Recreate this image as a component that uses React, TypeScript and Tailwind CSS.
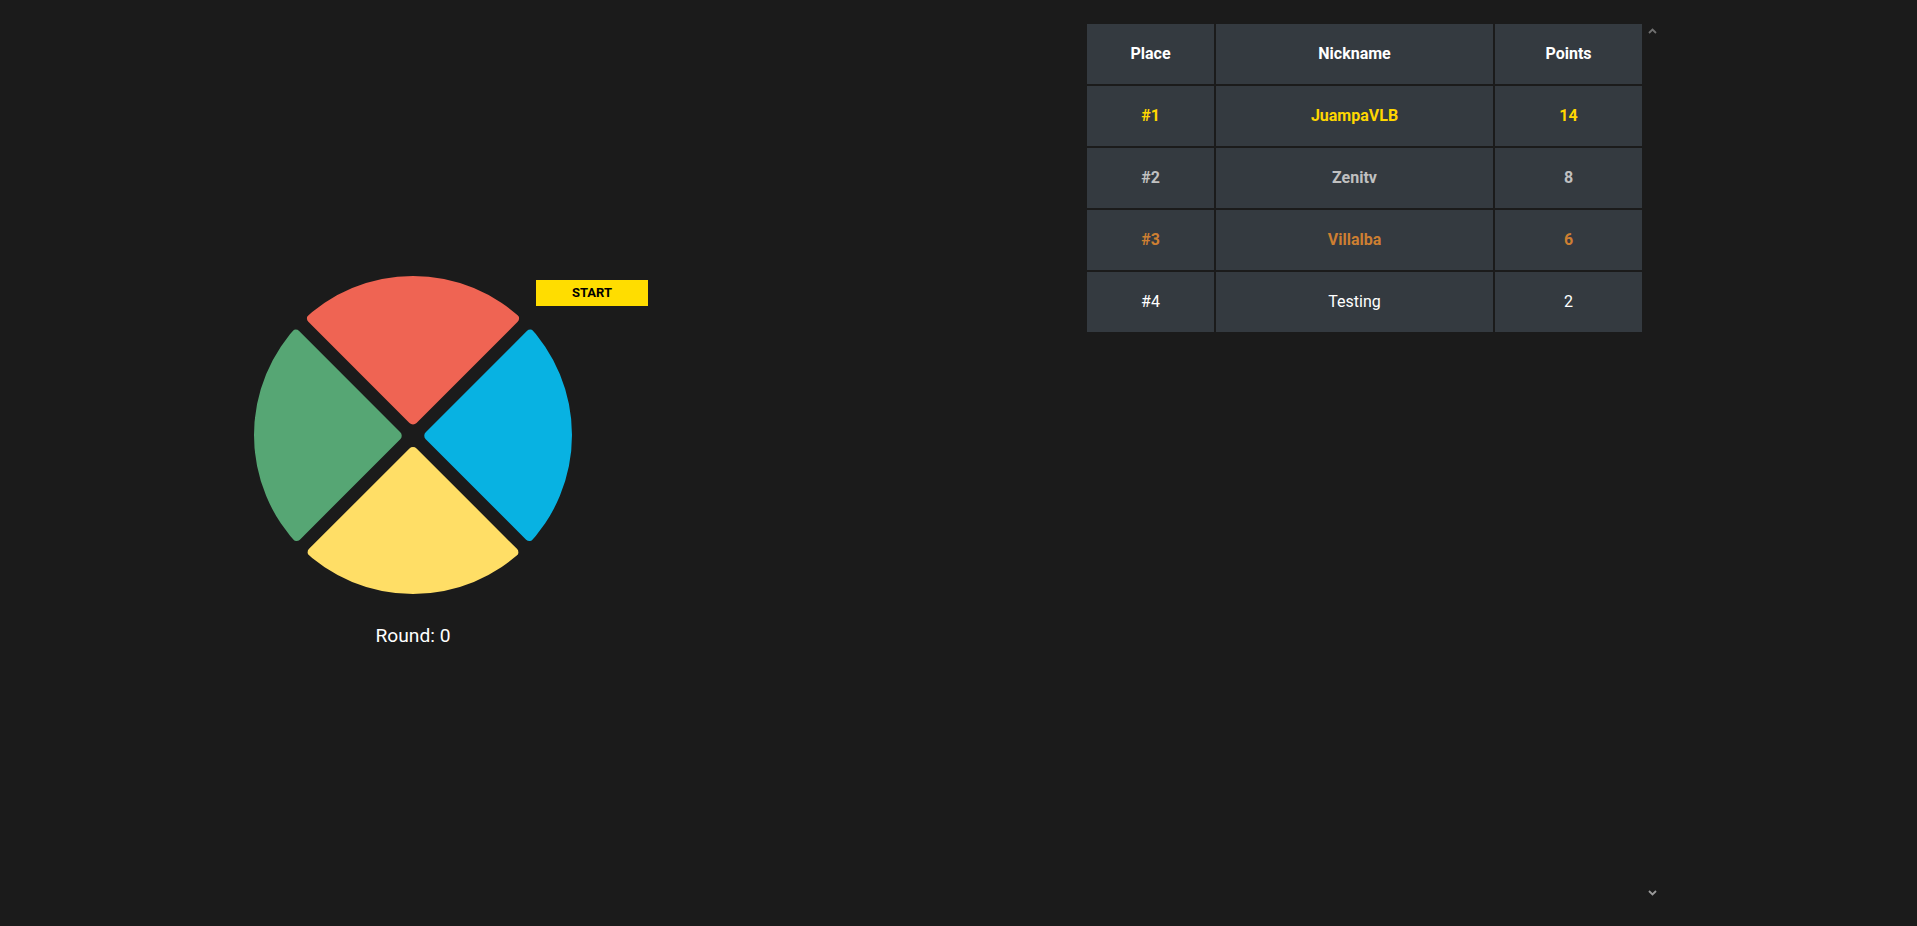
const players = [
  { place: '#1', nickname: 'JuampaVLB', points: 14, color: 'text-[#ffd700] font-bold' },
  { place: '#2', nickname: 'Zenitv', points: 8, color: 'text-[#c0c0c0] font-bold' },
  { place: '#3', nickname: 'Villalba', points: 6, color: 'text-[#cd7f32] font-bold' },
  { place: '#4', nickname: 'Testing', points: 2, color: 'text-white' },
];

function Chevron({ down, color }: { down?: boolean; color: string }) {
  return (
    <svg width="9" height="6" viewBox="0 0 9 6" className={down ? 'rotate-180' : ''}>
      <path d="M1 5 L4.5 1.5 L8 5" fill="none" stroke={color} strokeWidth="1.8" />
    </svg>
  );
}

function Board() {
  return (
    <div className="relative h-[318px] w-[318px]">
      <div className="grid h-full w-full rotate-45 grid-cols-2 grid-rows-2 gap-[13px] overflow-hidden rounded-full">
        <button className="rounded-[5px] bg-[#ef6453]" />
        <button className="rounded-[5px] bg-[#08b2e2]" />
        <button className="rounded-[5px] bg-[#56a674]" />
        <button className="rounded-[5px] bg-[#ffde66]" />
      </div>
      <button className="absolute left-[282px] top-[4px] h-[26px] w-[112px] bg-[#ffdd00] text-[13px] font-bold text-black">
        START
      </button>
    </div>
  );
}

export default function App() {
  return (
    <div className="flex h-screen bg-[#1b1b1b] font-['Roboto',sans-serif] text-white">
      <div className="flex w-[826px] flex-col items-center pt-[276px]">
        <Board />
        <p className="mt-[28px] text-[19.2px]">Round: 0</p>
      </div>

      <div className="ml-[259px] mt-[22px] flex h-[95vh] w-[576px]">
        <div className="w-[559px]">
          <table className="border-separate border-spacing-[2px] text-base">
            <thead>
              <tr>
                <th className="h-[60px] w-[127px] bg-[#343a40] font-bold">Place</th>
                <th className="h-[60px] w-[277px] bg-[#343a40] font-bold">Nickname</th>
                <th className="h-[60px] w-[147px] bg-[#343a40] font-bold">Points</th>
              </tr>
            </thead>
            <tbody>
              {players.map((p) => (
                <tr key={p.place} className={p.color}>
                  <td className="h-[60px] bg-[#343a40] text-center">{p.place}</td>
                  <td className="h-[60px] bg-[#343a40] text-center">{p.nickname}</td>
                  <td className="h-[60px] bg-[#343a40] text-center">{p.points}</td>
                </tr>
              ))}
            </tbody>
          </table>
        </div>
        <div className="flex w-[17px] flex-col justify-between">
          <div className="flex h-[17px] items-center justify-center">
            <Chevron color="#707070" />
          </div>
          <div className="flex h-[17px] items-center justify-center">
            <Chevron down color="#9a9a9a" />
          </div>
        </div>
      </div>
    </div>
  );
}
